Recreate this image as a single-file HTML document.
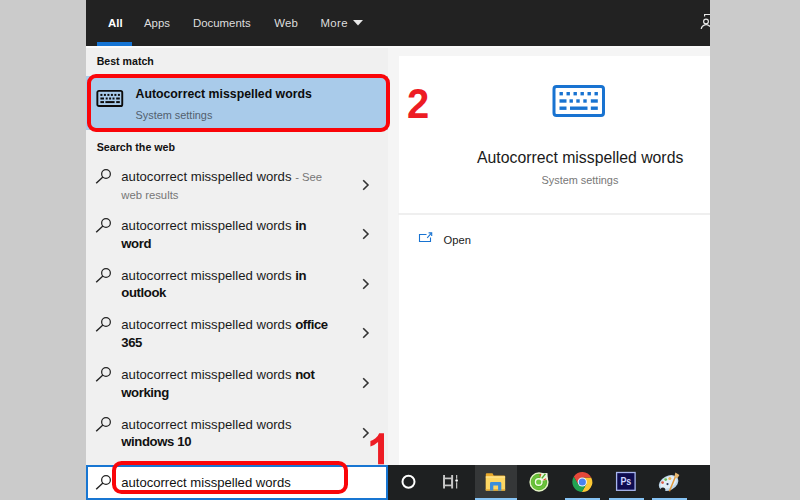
<!DOCTYPE html>
<html>
<head>
<meta charset="utf-8">
<style>
html,body{margin:0;padding:0;}
body{width:800px;height:500px;overflow:hidden;background:#cbcbcb;font-family:"Liberation Sans",sans-serif;position:relative;}
.abs{position:absolute;}
#hdr{left:86px;top:0;width:624px;height:46px;background:#222222;}
.tab{position:absolute;top:15.5px;font-size:11.4px;color:#dedede;white-space:nowrap;line-height:14px;}
#left{left:86px;top:46px;width:302px;height:419px;background:#f0f0f0;}
#mid{left:388px;top:46px;width:322px;height:419px;background:#f5f5f5;}
#card{left:399px;top:56px;width:311px;height:409px;background:#fff;}
.sec{position:absolute;left:96.7px;font-size:10.6px;font-weight:bold;color:#111;line-height:13px;white-space:nowrap;}
#sel{left:86px;top:76px;width:302px;height:54px;background:#a9cbea;}
#red2{left:87.2px;top:74.2px;width:294.5px;height:49.6px;border:4px solid #fa0509;border-radius:9px;}
.item{position:absolute;left:121.3px;font-size:13.15px;color:#1a1a1a;line-height:17.4px;white-space:nowrap;}
.item b{font-weight:bold;color:#111;letter-spacing:-0.4px;}
.item .g{color:#767676;font-size:11.3px;}
.chev{position:absolute;left:361.6px;}
.mag{position:absolute;left:95px;}
#task{left:86px;top:465px;width:624px;height:35px;background:#1e2021;}
#sbox{left:86px;top:464.5px;width:298.3px;height:31.5px;background:#fff;border:2px solid #1876d2;}
#red1{left:112px;top:460.8px;width:228.2px;height:24.8px;border:4.5px solid #fa0509;border-radius:9.5px;}
.num{position:absolute;font-weight:bold;font-size:42px;color:#ed1c24;line-height:42px;}
</style>
</head>
<body>
<div id="hdr" class="abs"></div>
<div class="tab" style="left:108px;font-weight:bold;color:#fff;">All</div>
<div class="abs" style="left:97px;top:42px;width:35px;height:3.5px;background:#1574d4;"></div>
<div class="tab" style="left:144px;">Apps</div>
<div class="tab" style="left:193px;">Documents</div>
<div class="tab" style="left:274.3px;letter-spacing:0.2px;">Web</div>
<div class="tab" style="left:320.4px;letter-spacing:0.4px;">More</div>
<svg class="abs" style="left:352.7px;top:20px" width="10" height="6" viewBox="0 0 10 6"><path d="M0 0 L10 0 L5 5.5 Z" fill="#e8e8e8"/></svg>
<svg class="abs" style="left:700px;top:13px" width="10" height="18" viewBox="0 0 10 18"><g fill="none" stroke="#e8e8e8" stroke-width="1.2"><circle cx="6" cy="8.5" r="2.4"/><path d="M1.2 16 A5 5 0 0 1 10 13.5"/><path d="M4.6 3.6 V1.5 H10"/></g></svg>

<div id="left" class="abs"></div>
<div id="mid" class="abs"></div>
<div id="card" class="abs"></div>
<div class="abs" style="left:86px;top:46px;width:624px;height:1.5px;background:#fbfbfb;"></div>

<div class="sec" style="top:55px;">Best match</div>
<div id="sel" class="abs"></div>
<div id="red2" class="abs"></div>
<svg class="abs" style="left:96px;top:89px" width="28" height="19" viewBox="0 0 28 19">
<rect x="1.35" y="1.85" width="24.9" height="15.2" rx="1.6" fill="none" stroke="#0c0c0c" stroke-width="1.9"/>
<g fill="#0c0c0c">
<rect x="4.4" y="4.9" width="2" height="2"/><rect x="7.9" y="4.9" width="2" height="2"/><rect x="11.4" y="4.9" width="2" height="2"/><rect x="14.9" y="4.9" width="2" height="2"/><rect x="18.4" y="4.9" width="2" height="2"/><rect x="21.9" y="4.9" width="2" height="2"/>
<rect x="4.4" y="8.5" width="3.6" height="2"/><rect x="9.7" y="8.5" width="2" height="2"/><rect x="13.1" y="8.5" width="2" height="2"/><rect x="16.5" y="8.5" width="2" height="2"/><rect x="20.2" y="8.5" width="3.6" height="2"/>
<rect x="4.4" y="12.1" width="3.6" height="2"/><rect x="9.4" y="12.1" width="9.2" height="2"/><rect x="20.2" y="12.1" width="3.6" height="2"/>
</g></svg>
<div class="abs" style="left:135.5px;top:86.7px;font-size:12.3px;font-weight:bold;color:#0c0c0c;line-height:15px;white-space:nowrap;">Autocorrect misspelled words</div>
<div class="abs" style="left:135.5px;top:109px;font-size:10.9px;color:#52606e;line-height:13px;white-space:nowrap;">System settings</div>

<div class="sec" style="top:141px;font-size:10.7px;">Search the web</div>

<!-- list items -->
<svg width="0" height="0" style="position:absolute"><defs>
<g id="mg"><circle cx="11" cy="5.9" r="4.35" fill="none" stroke="#222" stroke-width="1.25"/><path d="M7.9 9 L1.2 15.3" stroke="#222" stroke-width="1.4" fill="none"/></g>
<g id="cv"><path d="M1.2 1.2 L6 6 L1.2 10.8" stroke="#333" stroke-width="1.6" fill="none"/></g>
</defs></svg>
<div class="item" style="top:168.0px;">autocorrect misspelled words <span class="g">- See</span><br><span class="g">web results</span></div>
<svg class="mag" style="top:168.0px" width="17" height="17"><use href="#mg"/></svg>
<svg class="chev" style="top:178.8px" width="8" height="12"><use href="#cv"/></svg>
<div class="item" style="top:217.4px;">autocorrect misspelled words <b>in</b><br><b>word</b></div>
<svg class="mag" style="top:217.4px" width="17" height="17"><use href="#mg"/></svg>
<svg class="chev" style="top:228.2px" width="8" height="12"><use href="#cv"/></svg>
<div class="item" style="top:267.0px;">autocorrect misspelled words <b>in</b><br><b>outlook</b></div>
<svg class="mag" style="top:267.0px" width="17" height="17"><use href="#mg"/></svg>
<svg class="chev" style="top:277.8px" width="8" height="12"><use href="#cv"/></svg>
<div class="item" style="top:316.4px;">autocorrect misspelled words <b>office</b><br><b>365</b></div>
<svg class="mag" style="top:316.4px" width="17" height="17"><use href="#mg"/></svg>
<svg class="chev" style="top:327.2px" width="8" height="12"><use href="#cv"/></svg>
<div class="item" style="top:366.4px;">autocorrect misspelled words <b>not</b><br><b>working</b></div>
<svg class="mag" style="top:366.4px" width="17" height="17"><use href="#mg"/></svg>
<svg class="chev" style="top:377.2px" width="8" height="12"><use href="#cv"/></svg>
<div class="item" style="top:416.0px;">autocorrect misspelled words<br><b>windows 10</b></div>
<svg class="mag" style="top:416.0px" width="17" height="17"><use href="#mg"/></svg>
<svg class="chev" style="top:426.8px" width="8" height="12"><use href="#cv"/></svg>

<!-- right card -->
<svg class="abs" style="left:551px;top:84px" width="56" height="35" viewBox="0 0 56 35">
<rect x="3" y="2.6" width="49.5" height="29" rx="2.5" fill="none" stroke="#1873d1" stroke-width="3"/>
<g fill="#1873d1">
<rect x="8.5" y="8" width="3.4" height="3.4"/><rect x="15.5" y="8" width="3.4" height="3.4"/><rect x="22.5" y="8" width="3.4" height="3.4"/><rect x="29.5" y="8" width="3.4" height="3.4"/><rect x="36.5" y="8" width="3.4" height="3.4"/><rect x="43.5" y="8" width="3.4" height="3.4"/>
<rect x="8.5" y="15.3" width="7" height="3.4"/><rect x="18.5" y="15.3" width="3.4" height="3.4"/><rect x="25.3" y="15.3" width="3.4" height="3.4"/><rect x="32.3" y="15.3" width="3.4" height="3.4"/><rect x="39.8" y="15.3" width="7" height="3.4"/>
<rect x="8.5" y="22.5" width="7" height="3.4"/><rect x="19" y="22.5" width="17.5" height="3.4"/><rect x="39.8" y="22.5" width="7" height="3.4"/>
</g></svg>
<div class="abs" style="left:477px;top:147.7px;font-size:15.8px;color:#1a1a1a;line-height:19px;white-space:nowrap;">Autocorrect misspelled words</div>
<div class="abs" style="left:541.5px;top:173.7px;font-size:10.9px;color:#777;line-height:13px;white-space:nowrap;">System settings</div>
<div class="abs" style="left:398px;top:212.5px;width:312px;height:2px;background:#efefef;"></div>
<svg class="abs" style="left:417px;top:230.3px" width="17" height="14" viewBox="0 0 17 14"><g fill="none" stroke="#1873d1" stroke-width="1.1"><path d="M9.5 4.5 H2.5 V11.5 H13.5 V7.5"/><path d="M10.2 7.8 L14.4 3.2"/><path d="M11.6 2.9 H14.7 V6"/></g></svg>
<div class="abs" style="left:443.5px;top:234px;font-size:11.2px;color:#1a1a1a;line-height:13px;white-space:nowrap;">Open</div>

<div class="num" style="left:407.4px;top:81.6px;font-size:43px;transform-origin:0 0;transform:scaleX(0.93);">2</div>

<!-- taskbar -->
<div id="task" class="abs"></div>
<svg class="abs" style="left:0;top:0" width="800" height="500" viewBox="0 0 800 500"><path d="M384.0 464.26 H378.07 V441.91 Q374.82 444.95 370.41 446.41 V441.03 Q372.73 440.27 375.45 438.15 Q378.18 436.03 379.19 433.2 H384.0 Z" fill="#ed1c24"/></svg>
<div id="sbox" class="abs"></div>
<svg class="abs" style="left:95px;top:474px" width="17" height="17"><use href="#mg"/></svg>
<div class="abs" style="left:121.2px;top:475px;font-size:13.1px;color:#111;line-height:16px;white-space:nowrap;">autocorrect misspelled words</div>
<div id="red1" class="abs"></div>

<!-- taskbar icons -->
<div class="abs" style="left:474.5px;top:465px;width:42.5px;height:35px;background:#353738;"></div>
<div class="abs" style="left:474.5px;top:497.7px;width:42.5px;height:2.3px;background:#86c3f4;"></div>
<div class="abs" style="left:564.6px;top:497.7px;width:35.8px;height:2.3px;background:#86c3f4;"></div>
<div class="abs" style="left:608.5px;top:497.7px;width:35.1px;height:2.3px;background:#86c3f4;"></div>
<div class="abs" style="left:651.7px;top:497.7px;width:35.8px;height:2.3px;background:#86c3f4;"></div>
<svg class="abs" style="left:388px;top:465px" width="322" height="35" viewBox="388 465 322 35">
<!-- cortana -->
<circle cx="408.5" cy="481.7" r="6" fill="none" stroke="#fff" stroke-width="2"/>
<!-- task view -->
<g fill="none" stroke="#c6c6c6">
<rect x="444.05" y="478.4" width="8.1" height="7" stroke-width="1.7"/>
<path d="M444.05 475 V488.5 M452.15 475 V488.5" stroke-width="1.9"/>
<path d="M456.65 475 V478.8 M456.65 482.3 V488.5" stroke-width="1.2"/>
</g>
<circle cx="456.65" cy="480.5" r="1.3" fill="#fff"/>
<!-- explorer -->
<path d="M485.8 474.3 Q485.8 473.3 486.8 473.3 H492.5 L493.7 475.6 H504.1 Q505.1 475.6 505.1 476.6 V490.4 H485.8 Z" fill="#e9a92a"/>
<rect x="485.8" y="476.4" width="19.3" height="14" fill="#fdd663"/>
<rect x="485.8" y="476.4" width="19.3" height="1.2" fill="#ffe596"/><rect x="485.8" y="489.1" width="19.3" height="1.3" fill="#eab03a"/>
<path d="M490 490.4 V483.2 Q490 482 491.2 482 H500.1 Q501.3 482 501.3 483.2 V490.4 H498.1 V485.6 H493.3 V490.4 Z" fill="#3b8edb"/>
<!-- coc coc -->
<circle cx="539" cy="482" r="8.9" fill="#58b32d" stroke="#e4f3c6" stroke-width="1.5"/>
<circle cx="538.6" cy="482.2" r="6.2" fill="none" stroke="#6cc23c" stroke-width="2.4"/>
<path d="M539.4 481.6 L541.6 473.2 L547.4 472.9 L547.9 479.4 Z" fill="#eef5de"/>
<path d="M541.8 478.4 L545.4 473.9" stroke="#4daf2c" stroke-width="1.5" fill="none"/>
<path d="M539.9 476.3 L540.6 473.9 M543.6 480 L546.2 478.7" stroke="#e3402c" stroke-width="1.2" fill="none"/>
<circle cx="538.7" cy="482" r="3.3" fill="#6fca40" stroke="#f4fbe8" stroke-width="1.4"/>
<!-- chrome -->
<path d="M582.30 477.40 L591.18 477.40 A10.0 10.0 0 0 1 581.84 491.99 L586.28 484.30 L582.3 482.0 Z" fill="#fdc834"/><path d="M586.28 484.30 L581.84 491.99 A10.0 10.0 0 0 1 573.88 476.61 L578.32 484.30 L582.3 482.0 Z" fill="#22a352"/><path d="M578.32 484.30 L573.88 476.61 A10.0 10.0 0 0 1 591.18 477.40 L582.30 477.40 L582.3 482.0 Z" fill="#e5483a"/><circle cx="582.3" cy="482.0" r="4.6" fill="#f3f6fb"/><circle cx="582.3" cy="482.0" r="3.6" fill="#4a83ef"/>
<!-- photoshop -->
<rect x="616.6" y="472.5" width="18.5" height="17.8" fill="#0e0c50" stroke="#a9b7ef" stroke-width="1.3"/>
<text x="620.4" y="484.8" font-family="Liberation Sans, sans-serif" font-weight="bold" font-size="11" fill="#cdd7ff" textLength="10.9" lengthAdjust="spacingAndGlyphs">Ps</text>
<!-- paint -->
<g transform="rotate(-27 668.6 483.1)">
<ellipse cx="668.6" cy="483.1" rx="10.4" ry="7.2" fill="#bfd8eb"/>
<ellipse cx="668.8" cy="482.5" rx="8.8" ry="5.4" fill="#e3eef7"/>
</g>
<circle cx="662.9" cy="489.9" r="2.5" fill="#1e2021"/>
<circle cx="662.6" cy="482.6" r="1.4" fill="#e0604a"/>
<circle cx="665.7" cy="479.6" r="1.4" fill="#6cbf5c"/>
<circle cx="669.8" cy="478.4" r="1.5" fill="#f0b453"/>
<circle cx="667.5" cy="484.1" r="1.1" fill="#26345c"/>
<path d="M669.4 491.3 L675.6 476.3" stroke="#e2993a" stroke-width="1.5" fill="none"/>
<path d="M674.3 476.9 L677.4 478.3 L679.4 474.9 L675.4 472.5 Z" fill="#e6b772"/>
</svg>
</body>
</html>
